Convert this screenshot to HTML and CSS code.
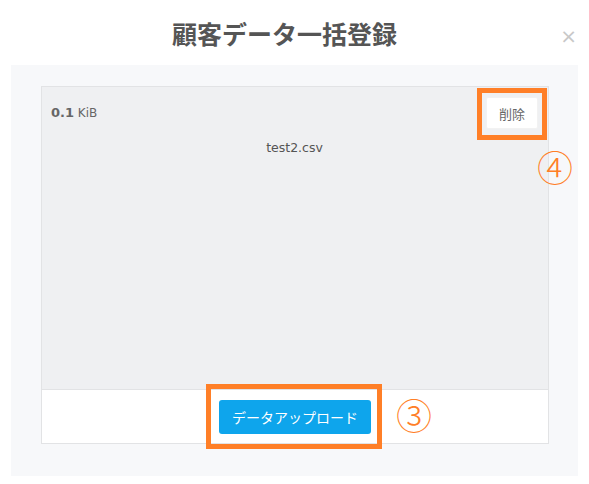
FILE: index.html
```html
<!DOCTYPE html>
<html lang="ja">
<head>
<meta charset="utf-8">
<title>顧客データ一括登録</title>
<link rel="stylesheet" href="styles.css">
</head>
<body>
<div class="modal">
  <header class="modal-header">
    <h1 class="modal-title">顧客データ一括登録</h1>
    <span class="close">×</span>
  </header>
  <div class="modal-body">
    <div class="upload-box">
      <div class="dropzone">
        <div class="file-row">
          <div class="file-size"><strong>0.1</strong> KiB</div>
          <button class="btn-delete marked">削除<span class="num num-4">④</span></button>
        </div>
        <div class="file-name">test2.csv</div>
      </div>
      <div class="upload-footer">
        <button class="btn-upload marked">データアップロード<span class="num num-3">③</span></button>
      </div>
    </div>
  </div>
</div>
</body>
</html>
```
FILE: styles.css
```css
* { box-sizing: border-box; }
html, body { margin: 0; padding: 0; background: #fff; }
body {
  font-family: "Noto Sans CJK JP", "Noto Sans", sans-serif;
  width: 589px;
  height: 484px;
  overflow: hidden;
}
.modal { padding: 0 11px 0 11px; }
.modal-header {
  height: 65px;
  position: relative;
  display: flex;
  align-items: center;
  justify-content: center;
  padding-top: 2px;
  padding-right: 20px;
}
.modal-title {
  margin: 0;
  font-size: 25px;
  font-weight: 700;
  color: #555;
  line-height: 1;
}
.close {
  position: absolute;
  right: 1px;
  top: 26px;
  font-family: "DejaVu Sans", sans-serif;
  font-size: 20px;
  color: #c8c8c8;
  line-height: 1;
}
.modal-body {
  background: #f7f8fa;
  padding: 21px 29px 31px 30px;
  height: 411px;
}
.upload-box {
  border: 1px solid #e2e3e5;
  background: #fff;
}
.dropzone {
  background: #eff0f2;
  height: 303px;
  padding: 10px 10px 0 9px;
  border-bottom: 1px solid #e2e3e5;
}
.file-row {
  display: flex;
  justify-content: space-between;
  align-items: flex-start;
}
.file-size {
  font-family: "DejaVu Sans", sans-serif;
  font-size: 12px;
  color: #666;
  padding-top: 8px;
}
.file-size strong { font-weight: 700; font-size: 13px; }
.file-name {
  text-align: center;
  font-family: "DejaVu Sans", sans-serif;
  font-size: 12.5px;
  color: #555;
  margin-top: 11px;
}
.marked { position: relative; }
.btn-delete {
  width: 52px;
  height: 32px;
  background: #fff;
  border: 1px solid #f2f2f2;
  border-radius: 2px;
  font-family: "Noto Sans CJK JP", sans-serif;
  font-size: 13px;
  color: #666;
  padding: 0;
}
.btn-delete::after {
  content: "";
  position: absolute;
  left: -10px;
  right: -10px;
  top: -10px;
  bottom: -12px;
  border: 5px solid #ff7f27;
}
.upload-footer {
  height: 53px;
  display: flex;
  align-items: center;
  justify-content: center;
}
.btn-upload {
  width: 152px;
  height: 34px;
  background: #0ea5ec;
  border: none;
  border-radius: 3px;
  color: #fff;
  font-family: "Noto Sans CJK JP", sans-serif;
  font-size: 14px;
  padding: 0;
}
.btn-upload::after {
  content: "";
  position: absolute;
  left: -13px;
  right: -11px;
  top: -16px;
  bottom: -15px;
  border: 5px solid #ff7f27;
}
.num {
  position: absolute;
  font-family: "Noto Sans CJK JP", sans-serif;
  font-weight: 300;
  color: #ff7f27;
  font-size: 36px;
  line-height: 1;
}
.num-4 { left: 50px; top: 50px; }
.num-3 { left: 177px; top: -4px; }
```
